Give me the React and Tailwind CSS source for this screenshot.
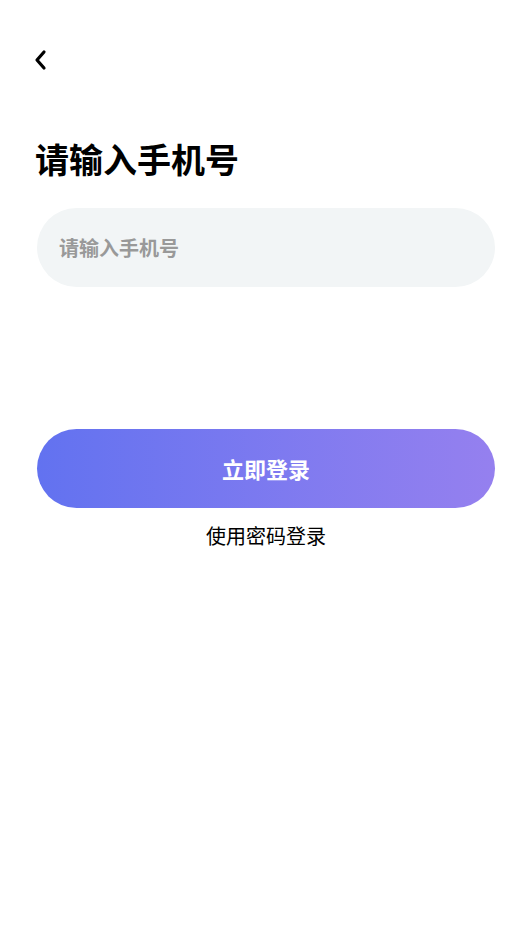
import { useState } from "react";

function BackIcon() {
  return (
    <svg width="14" height="22" viewBox="0 0 14 22" fill="none">
      <path
        d="M11 3 L4 11 L11 19"
        stroke="#000"
        strokeWidth="3.2"
        strokeLinecap="round"
        strokeLinejoin="round"
      />
    </svg>
  );
}

export default function App() {
  const [phone, setPhone] = useState("");

  return (
    <div
      className="min-h-[946px] w-full bg-white flex flex-col px-[37px]"
      style={{ fontFamily: '"Noto Sans CJK SC", "Noto Sans", sans-serif' }}
    >
      <div className="pt-[49px] h-[72px]">
        <button className="-ml-[4px] flex items-center">
          <BackIcon />
        </button>
      </div>

      <h1 className="mt-[63px] text-[34px] leading-[48px] font-bold text-black -ml-[2px]">
        请输入手机号
      </h1>

      <div className="mt-[25px] h-[79px] rounded-full bg-[#f2f5f6] flex items-center px-[22px]">
        <input
          value={phone}
          onChange={(e) => setPhone(e.target.value)}
          placeholder="请输入手机号"
          className="w-full bg-transparent outline-none text-[20px] font-bold text-[#333] placeholder:text-[#999]"
        />
      </div>

      <button className="mt-[142px] h-[79px] rounded-full bg-gradient-to-r from-[#6272f0] to-[#9580ef] text-white text-[22px] font-bold">
        立即登录
      </button>

      <p className="mt-[14px] text-center text-[20px] leading-[28px] text-black">
        使用密码登录
      </p>
    </div>
  );
}
